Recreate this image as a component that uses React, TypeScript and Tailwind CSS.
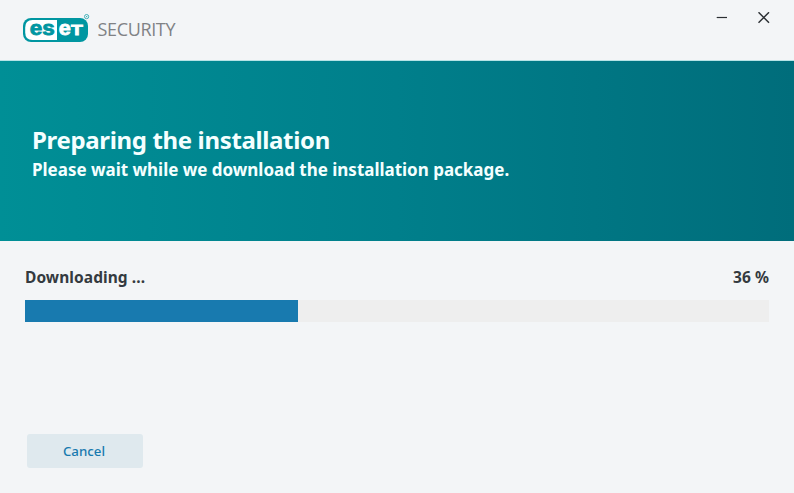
function Logo() {
  return (
    <svg width="160" height="36" viewBox="20 10 160 36" fill="none" role="img" aria-label="ESET Security">
      <rect x="23" y="18" width="65" height="24" rx="8" fill="#0096a1" />
      <path d="M57 20H32.5Q25.2 20 25.2 27.5V32.5Q25.2 40 32.5 40H57Z" fill="#fff" />
      <g fontFamily="Liberation Sans, sans-serif" fontWeight="700" strokeWidth="0.8">
        <text x="29.8" y="35.4" fontSize="20" fill="#0096a1" stroke="#0096a1" textLength="25" lengthAdjust="spacingAndGlyphs">
          es
        </text>
        <text x="58.8" y="35.4" fontSize="20" fill="#fff" stroke="#fff" textLength="12" lengthAdjust="spacingAndGlyphs">
          e
        </text>
        <text x="71" y="35.4" fontSize="15.4" fill="#fff" stroke="#fff" textLength="11.8" lengthAdjust="spacingAndGlyphs">
          T
        </text>
      </g>
      <circle cx="86.6" cy="16.6" r="2.1" stroke="#2fa9b2" strokeWidth="0.9" />
      <circle cx="86.6" cy="16.6" r="0.7" fill="#2fa9b2" />
      <text
        x="97.5"
        y="36.2"
        fontFamily="Open Sans, sans-serif"
        fontSize="18"
        fill="#808285"
        textLength="78"
        lengthAdjust="spacing"
      >
        SECURITY
      </text>
    </svg>
  );
}

function WindowButtons() {
  return (
    <div className="flex items-center gap-[30px] text-[#2b2f33]">
      <button type="button" aria-label="Minimize">
        <svg width="12" height="12" viewBox="0 0 12 12" stroke="currentColor" className="block">
          <path d="M0.7 5.5H11" strokeWidth="1.2" />
        </svg>
      </button>
      <button type="button" aria-label="Close">
        <svg width="12" height="12" viewBox="0 0 12 12" stroke="currentColor" className="block">
          <path d="M0.5 0.3L11 10.8M11 0.3L0.5 10.8" strokeWidth="1.5" />
        </svg>
      </button>
    </div>
  );
}

export default function App() {
  const progress = 36;

  return (
    <div className="flex h-[493px] w-[794px] flex-col overflow-hidden bg-[#f3f5f7] font-['Noto_Sans',sans-serif] text-[#343a40]">
      <header className="flex h-[61px] items-start justify-between border-b border-[#b5e3e6] pl-5 pr-6">
        <div className="pt-2.5">
          <Logo />
        </div>
        <div className="pt-3">
          <WindowButtons />
        </div>
      </header>

      <section className="h-[180px] bg-linear-to-r from-[#008f96] via-[#007f8b] to-[#006d7b] px-8 pt-[63px] text-[#f4ffff]">
        <h1 className="text-2xl leading-8 font-bold tracking-[-0.35px] whitespace-nowrap">
          Preparing the installation
        </h1>
        <p className="text-[17px] leading-7 font-bold tracking-[-0.015px] whitespace-nowrap">
          Please wait while we download the installation package.
        </p>
      </section>

      <main className="flex flex-1 flex-col items-start px-[25px] pt-6">
        <div className="flex w-full justify-between text-[15.5px] leading-6 font-bold tracking-[0.07px]">
          <span>Downloading ...</span>
          <span>{progress} %</span>
        </div>
        <div className="mt-[11px] h-[22px] w-full bg-[#eeeeee]">
          <div className="h-full bg-[#187aaf]" style={{ width: `${progress + 0.7}%` }} />
        </div>
        <button
          type="button"
          className="mt-28 ml-0.5 h-[34px] w-[116px] rounded-[3px] bg-[#dfe9ee] pr-0.5 pt-px text-[13.3px] font-medium text-[#187aaf]"
        >
          Cancel
        </button>
      </main>
    </div>
  );
}
